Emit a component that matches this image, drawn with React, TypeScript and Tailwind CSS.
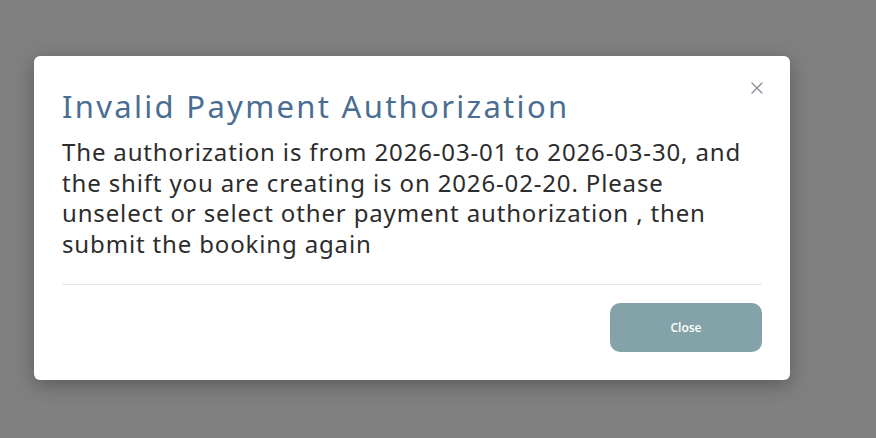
import React from 'react';
import { X } from 'lucide-react';

export default function App() {
  return (
    <div className="relative w-[876px] h-[438px] bg-[#808080] overflow-hidden" style={{ fontFamily: '"Noto Sans", sans-serif' }}>
      <div className="absolute left-[34px] top-[56px] w-[756px] bg-white rounded-md shadow-[0_5px_20px_rgba(0,0,0,0.3)] px-[28px] pt-[28px] pb-[28px]">
        <button className="absolute right-[23px] top-[22px] text-[#8a919a]">
          <X size={20} strokeWidth={1.6} />
        </button>
        <h3 className="text-[31px] leading-[44px] text-[#4a6d92] font-normal tracking-[2.3px]">Invalid Payment Authorization</h3>
        <p className="text-[24px] leading-[30.5px] text-[#2c2c2c] mt-[9px] tracking-[0.85px]">
          The authorization is from 2026-03-01 to 2026-03-30, and the shift you are creating is on 2026-02-20. Please unselect or select other payment authorization , then submit the booking again
        </p>
        <div className="mt-[25px] border-t border-[#e6e6e6]" />
        <div className="flex justify-end mt-[18px]">
          <button className="w-[152px] h-[49px] rounded-[10px] bg-[#84a3a8] text-white text-[12px] font-semibold" style={{ fontFamily: '"Open Sans", sans-serif' }}>
            Close
          </button>
        </div>
      </div>
    </div>
  );
}
